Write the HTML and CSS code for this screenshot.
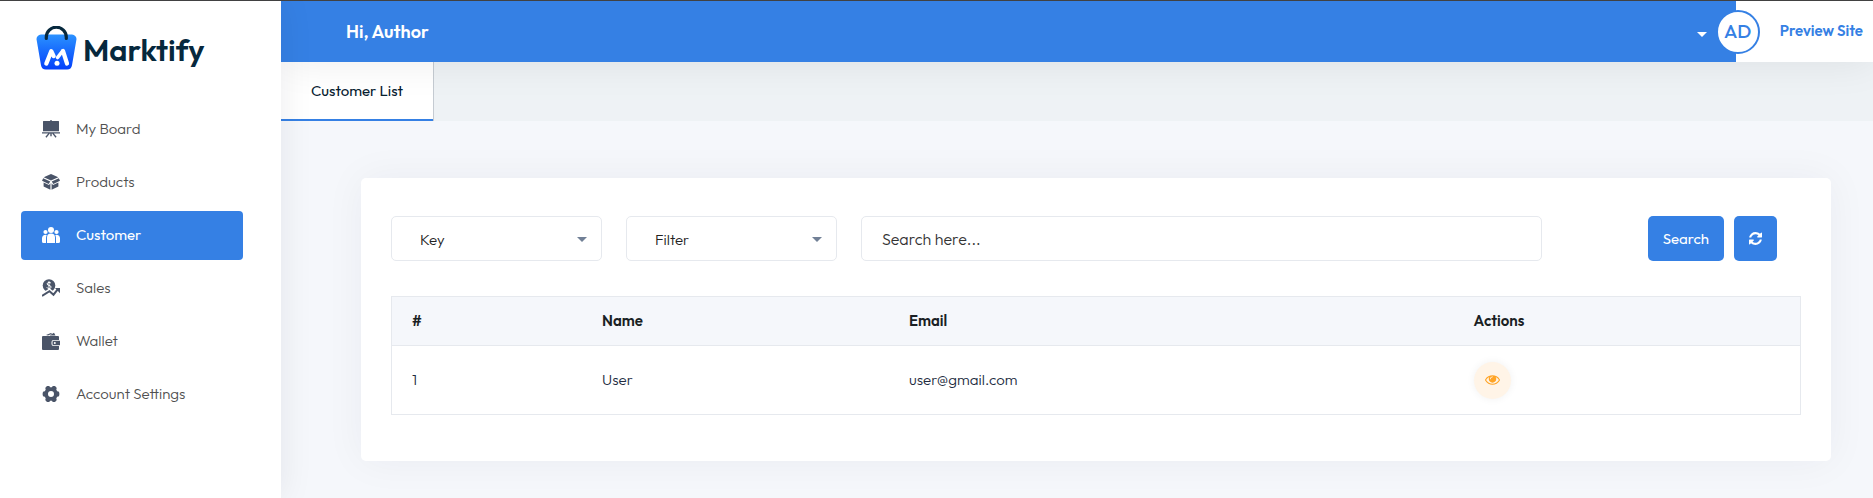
FILE: index.html
```html
<!DOCTYPE html>
<html lang="en">
<head>
<meta charset="utf-8">
<meta name="viewport" content="width=device-width, initial-scale=1">
<title>Customer List - Marktify</title>
<link rel="stylesheet" href="styles.css">
</head>
<body>
<div class="app">
  <aside class="sidebar">
    <a class="brand" href="#">
      <svg class="brand-mark" viewBox="0 0 41 44" aria-hidden="true">
        <defs><linearGradient id="bag" x1="0" y1="0" x2="0" y2="1"><stop offset="0" stop-color="#2b92ff"/><stop offset="1" stop-color="#0340fb"/></linearGradient></defs>
        <path d="M5 8.500h31a4.500 4.500 0 0 1 4.400 5.300l-4.400 25.500a5 5 0 0 1-5 4.200H10a5 5 0 0 1-5-4.200L.6 13.800A4.500 4.500 0 0 1 5 8.500z" fill="url(#bag)"/>
        <path d="M10.300 12.500v-1.300a10 10 0 0 1 20 0v1.300" fill="none" stroke="#06283d" stroke-width="3.200" stroke-linecap="round"/>
        <path d="M10.300 37.600l5-12.500 2.400 5M27 25l4 12.500" fill="none" stroke="#fff" stroke-width="4.200" stroke-linecap="round" stroke-linejoin="round"/>
        <path d="M21.600 31.500l5-6.500" fill="none" stroke="#fff" stroke-width="3.600" stroke-linecap="round"/>
        <circle cx="21" cy="37.200" r="2.500" fill="#fff"/>
      </svg>
      <span class="brand-name">Marktify</span>
    </a>
    <nav class="menu" aria-label="Main">
      <a class="menu-item" href="#">
        <svg class="icon" viewBox="0 0 18 18" aria-hidden="true"><path d="M8.300 0h1.400v1h6.800q.5 0 .5.500V11.200H1V1.500Q1 1 1.500 1h6.800zM0 12.200h18v1.200h-6.200l2.800 3.400-1.100.9-3.300-4.100h-.5v2.700H8.300v-2.700h-.5l-3.300 4.100-1.100-.9 2.800-3.400H0z"/></svg>
        <span>My Board</span>
      </a>
      <a class="menu-item" href="#">
        <svg class="icon" viewBox="0 0 18 18" aria-hidden="true"><path d="M9 1l7.300 3.200L9 7.500 1.700 4.200zM1.200 5.200l7.100 3.200-1.700 2.500L0 7.800zM16.800 5.200L9.700 8.400l1.700 2.500L18 7.800zM1.600 9.500l5.400 2.600 1.400-1.800v6.500l-6.800-3.200zM16.400 9.500L11 12.100l-1.400-1.800v6.500l6.800-3.200z"/></svg>
        <span>Products</span>
      </a>
      <a class="menu-item active" href="#" aria-current="page">
        <svg class="icon" viewBox="0 0 18 18" aria-hidden="true"><circle cx="9" cy="4" r="3"/><circle cx="3.500" cy="6" r="2.100"/><circle cx="14.500" cy="6" r="2.100"/><path d="M5 17v-5.500a4 4 0 0 1 8 0V17zM0 15.500V12a3.300 3.300 0 0 1 4.800-2.800Q4 10.400 4 12v5H1.500A1.500 1.500 0 0 1 0 15.500zM18 15.500V12a3.300 3.300 0 0 0-4.800-2.800Q14 10.400 14 12v5h2.500a1.500 1.500 0 0 0 1.500-1.500z"/></svg>
        <span>Customer</span>
      </a>
      <a class="menu-item" href="#">
        <svg class="icon" viewBox="0 0 18 18" aria-hidden="true"><circle cx="7" cy="6.500" r="6.300"/><path class="cut" d="M9 4.300Q8.500 3.400 7 3.400T5.100 4.900C5.100 6.800 9 5.900 9 7.900 9 9.100 8.200 9.600 7 9.600S5.200 9 4.900 8.200M7 2.200v8.600"/><path class="gap" d="M0 16.500l7.500-4.700 4 3.200 4.500-5"/><path class="line" d="M0 17l7.500-4.800 4 3.500 4-5"/><path d="M13 9h5v5.200z"/></svg>
        <span>Sales</span>
      </a>
      <a class="menu-item" href="#">
        <svg class="icon" viewBox="0 0 18 18" aria-hidden="true"><path d="M4 3l5-2 1 .8L6 3.400zM7.500 3.400L12 .8l1.500 2.600zM0 5q0-1 1-1h15q1 0 1 1v3h-5.500a2 2 0 0 0-2 2v2a2 2 0 0 0 2 2H17v3q0 1-1 1H1q-1 0-1-1zM11.800 8.800H18v4.400h-6.200q-1.300 0-1.300-1.200v-2q0-1.200 1.300-1.200z"/><circle class="dot" cx="12.800" cy="11" r="1"/></svg>
        <span>Wallet</span>
      </a>
      <a class="menu-item" href="#">
        <svg class="icon" viewBox="0 0 18 18" aria-hidden="true"><path fill-rule="evenodd" d="M5.300 1h2l.7 1.300h2L10.700 1h2q1.300.3 2 2l-.4 1.700.9 1.600 1.800.4q.9 2.300 0 4.600l-1.800.4-.9 1.600.4 1.700q-.7 1.700-2 2h-2L10 15.700H8L7.300 17h-2q-1.300-.3-2-2l.4-1.700-.9-1.600-1.800-.4q-.9-2.300 0-4.600l1.800-.4.900-1.600L3.300 3q.7-1.700 2-2zM9 6a3 3 0 1 0 0 6 3 3 0 0 0 0-6z"/></svg>
        <span>Account Settings</span>
      </a>
    </nav>
  </aside>

  <div class="page">
    <header class="topbar">
      <div class="topbar-main">
        <h1 class="greeting">Hi, Author</h1>
        <button class="account" type="button" aria-label="Account menu">
          <span class="caret"></span>
          <span class="avatar">AD</span>
        </button>
      </div>
      <a class="preview" href="#">Preview Site</a>
    </header>

    <nav class="tabs" aria-label="Section">
      <a class="tab" href="#" aria-current="page">Customer List</a>
    </nav>

    <main class="content">
      <section class="card">
        <form class="filters">
          <div class="select-box">
            <select class="field" aria-label="Key"><option>Key</option></select>
          </div>
          <div class="select-box">
            <select class="field" aria-label="Filter"><option>Filter</option></select>
          </div>
          <input class="field search" type="text" placeholder="Search here..." aria-label="Search here">
          <div class="actions">
            <button class="btn" type="submit">Search</button>
            <button class="btn" type="reset" aria-label="Refresh">
              <svg class="refresh" viewBox="0 0 1536 1536" aria-hidden="true"><path d="M1511 928q0 5-1 7-64 268-268 434.500T764 1536q-146 0-282.500-55T238 1324l-129 129q-19 19-45 19t-45-19-19-45V960q0-26 19-45t45-19h448q26 0 45 19t19 45-19 45l-137 137q71 66 161 102t187 36q134 0 250-65t186-179q11-17 53-117 8-23 30-23h192q13 0 22.500 9.500t9.500 22.500zm25-800v448q0 26-19 45t-45 19h-448q-26 0-45-19t-19-45 19-45l138-138Q969 256 768 256q-134 0-250 65T332 500q-11 17-53 117-8 23-30 23H50q-13 0-22.500-9.500T18 608v-7q65-268 270-434.500T768 0q146 0 284 55.500T1297 212l130-129q19-19 45-19t45 19 19 45z"/></svg>
            </button>
          </div>
        </form>

        <table class="customers">
          <thead>
            <tr><th class="col-id">#</th><th class="col-name">Name</th><th class="col-email">Email</th><th>Actions</th></tr>
          </thead>
          <tbody>
            <tr>
              <td>1</td><td>User</td><td>user@gmail.com</td>
              <td>
                <button class="view" type="button" aria-label="View customer">
                  <svg class="eye" viewBox="0 0 1792 1152" aria-hidden="true"><path d="M1664 576q-152-236-381-353 61 104 61 225 0 185-131.500 316.500T896 896 579.500 764.500 448 448q0-121 61-225-229 117-381 353 133 205 333.500 326.500T896 1024t434.500-121.500T1664 576zM944 192q0-20-14-34t-34-14q-125 0-214.500 89.500T592 448q0 20 14 34t34 14 34-14 14-34q0-86 61-147t147-61q20 0 34-14t14-34zm848 384q0 34-20 69-140 230-376.500 368.500T896 1152t-499.500-139T20 645Q0 610 0 576t20-69q140-229 376.500-368T896 0t499.500 139T1772 507q20 35 20 69z"/></svg>
                </button>
              </td>
            </tr>
          </tbody>
        </table>
      </section>
    </main>
  </div>
</div>
</body>
</html>
```
FILE: styles.css
```css
:root {
  --blue: #3580e4;
  --line: #e6e9ee;
  --page: #f5f7fb;
  --slate: #4a5468;
}

* { box-sizing: border-box; }

body {
  margin: 0;
  background: var(--page);
  color: #222b40;
  font-family: Outfit, Lato, "Open Sans", sans-serif;
  font-size: 15px;
  line-height: 20px;
}

a { color: inherit; text-decoration: none; }
button, input, select { font: inherit; }
button { padding: 0; border: 0; cursor: pointer; }

.app {
  display: flex;
  min-height: 100vh;
  border-top: 1px solid #444;
}

/* Sidebar */
.sidebar {
  flex: 0 0 281px;
  position: relative;
  z-index: 3;
  padding: 25px 38px 24px 21px;
  background: #fff;
  box-shadow: 0 0 32px rgba(20, 20, 40, .08);
}

.brand {
  display: flex;
  align-items: center;
  gap: 6px;
  height: 44px;
  padding-left: 15px;
}

.brand-mark { width: 41px; height: 44px; }

.brand-name {
  padding-top: 4px;
  color: #06283d;
  font-size: 31px;
  font-weight: 600;
  line-height: 40px;
}

.menu {
  display: flex;
  flex-direction: column;
  gap: 4px;
  margin-top: 35px;
}

.menu-item {
  display: flex;
  align-items: center;
  gap: 16px;
  height: 49px;
  padding: 0 21px 2px;
  border-radius: 4px;
  color: #505050;
  font-weight: 300;
}

.menu-item.active {
  background: var(--blue);
  color: #fff;
  font-weight: 400;
}

.icon { width: 18px; height: 18px; fill: var(--slate); }
.active .icon { fill: #fff; }
.icon .cut { fill: none; stroke: #fff; stroke-width: 1; }
.icon .gap { fill: none; stroke: #fff; stroke-width: 4; }
.icon .line { fill: none; stroke: var(--slate); stroke-width: 2; }
.icon .dot { fill: #fff; }

/* Header */
.page { flex: 1; min-width: 0; }

.topbar {
  position: relative;
  z-index: 2;
  display: flex;
  height: 61px;
  background: #fff;
  box-shadow: 0 0 40px rgba(0, 0, 0, .08);
}

.topbar-main {
  flex: 1;
  display: flex;
  align-items: center;
  justify-content: space-between;
  padding-left: 65px;
  background: var(--blue);
}

.greeting {
  margin: 0;
  color: #fff;
  font-size: 18px;
  font-weight: 600;
}

.account {
  display: flex;
  align-items: center;
  gap: 9px;
  margin-right: -24px;
  background: none;
}

.caret {
  margin-top: 5px;
  border: 5px solid transparent;
  border-top-color: #fff;
  border-bottom: 0;
}

.avatar {
  width: 44px;
  height: 44px;
  border: 2px solid var(--blue);
  border-radius: 50%;
  background: #fff;
  color: var(--blue);
  font-size: 19px;
  font-weight: 500;
  line-height: 38px;
}

.preview {
  padding: 20px 10px 20px 44px;
  color: var(--blue);
  font-weight: 600;
}

/* Tabs */
.tabs {
  display: flex;
  height: 59px;
  background: #eef2f5;
}

.tab {
  padding: 19px 30px 18px;
  border-right: 1px solid #c5cbd2;
  background: linear-gradient(var(--blue), var(--blue)) bottom / 100% 2px no-repeat #fff;
  color: #06202f;
}

/* Card */
.content { padding: 57px 42px 37px 80px; }

.card {
  padding: 38px 30px 46px;
  border-radius: 5px;
  background: #fff;
  box-shadow: 0 0 40px rgba(30, 20, 50, .05);
}

.filters {
  display: grid;
  grid-template-columns: repeat(12, 1fr);
  gap: 24px;
  margin-right: 24px;
}

.select-box { position: relative; grid-column: span 2; }

.select-box::after {
  content: "";
  position: absolute;
  top: 21px;
  right: 15px;
  border: 5px solid transparent;
  border-top-color: #718096;
  border-bottom: 0;
  pointer-events: none;
}

.field {
  display: block;
  width: 100%;
  height: 45px;
  padding: 2px 28px 0;
  border: 1px solid var(--line);
  border-radius: 5px;
  background: #fff;
  color: #222;
  font-weight: 300;
  appearance: none;
}

.search { grid-column: span 6; padding: 0 20px; font-size: 16px; }
.search::placeholder { color: #333; opacity: 1; }

.actions {
  grid-column: span 2;
  display: flex;
  justify-content: flex-end;
  gap: 10px;
}

.btn {
  height: 45px;
  padding: 0 15px;
  border-radius: 5px;
  background: var(--blue);
  color: #fff;
}

.refresh { display: block; width: 13px; height: 13px; fill: #fff; }

/* Table */
.customers {
  width: 100%;
  margin-top: 35px;
  border: 1px solid var(--line);
  border-spacing: 0;
  table-layout: fixed;
}

.customers th,
.customers td {
  padding: 0 20px;
  text-align: left;
}

.customers th {
  height: 49px;
  border-bottom: 1px solid var(--line);
  background: var(--page);
  color: #1a1f24;
  font-weight: 600;
}

.customers td { height: 68px; font-weight: 300; }

.col-id { width: 13.5%; }
.col-name { width: 21.8%; }
.col-email { width: 40.1%; }

.view {
  display: flex;
  align-items: center;
  justify-content: center;
  width: 37px;
  height: 37px;
  border-radius: 50%;
  background: #fff4e7;
  box-shadow: 0 0 8px rgba(0, 0, 0, .06);
}

.eye { width: 15px; height: 10px; fill: #ffa426; }
```
